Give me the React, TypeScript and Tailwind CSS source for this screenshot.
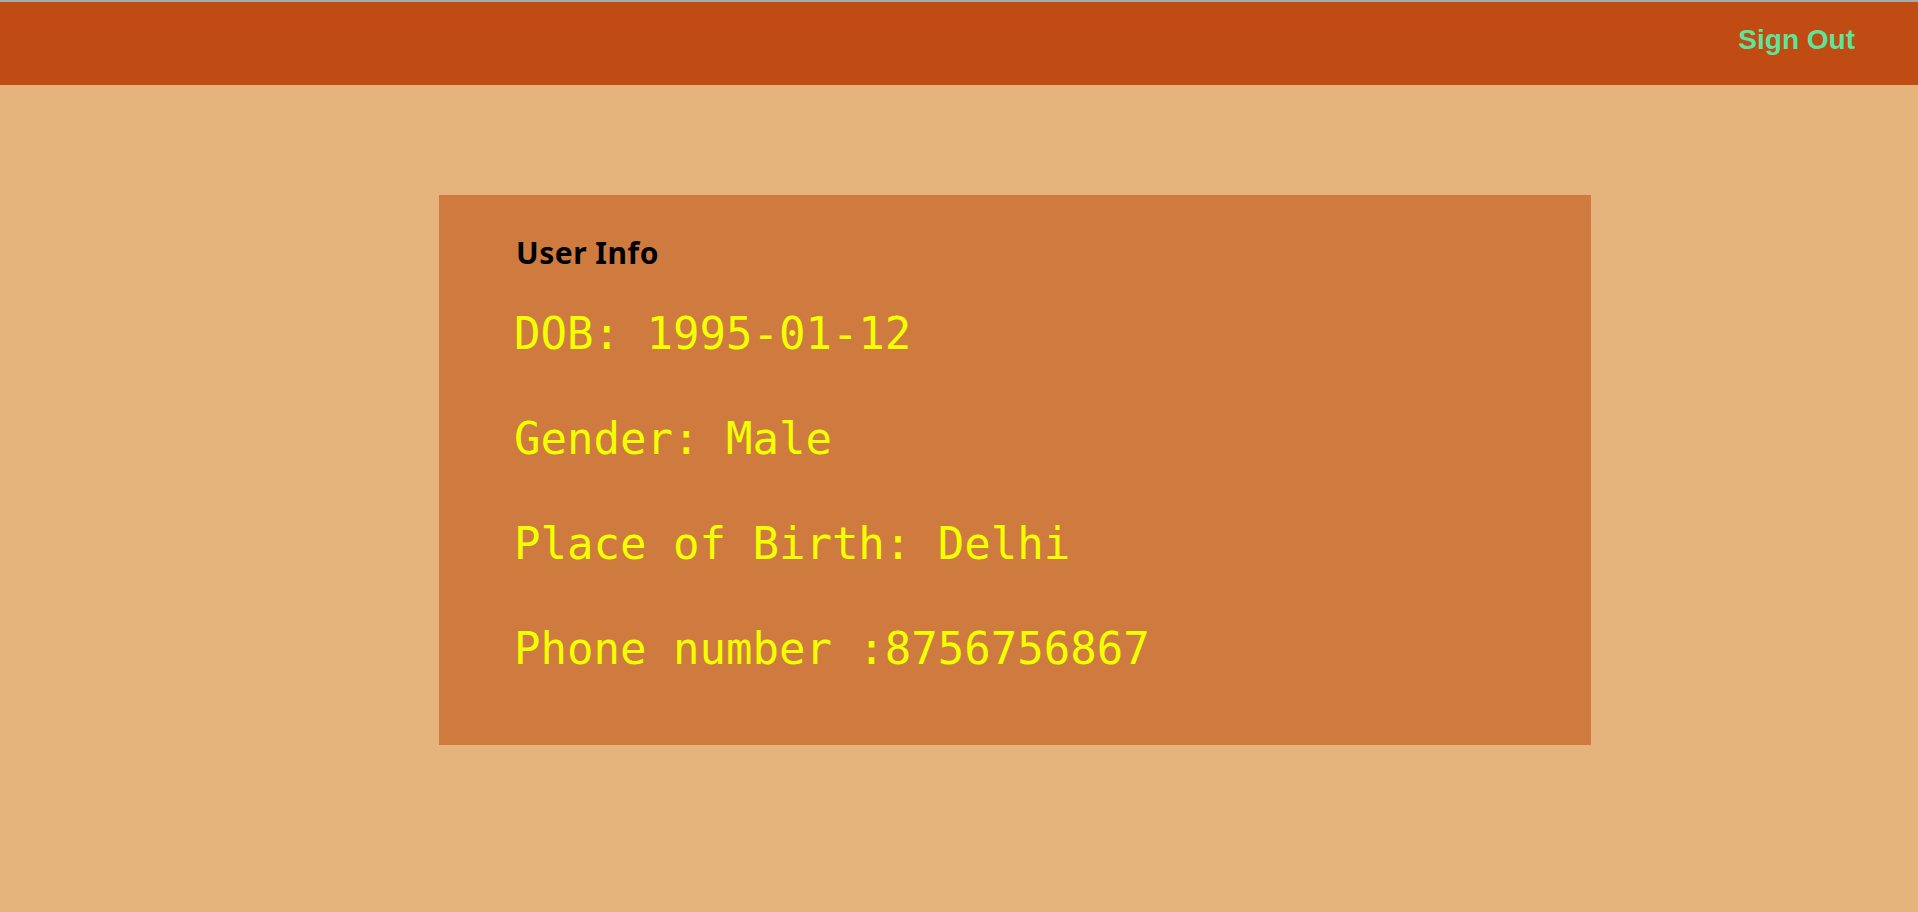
import React from "react";

export default function App() {
  const rows = [
    "DOB: 1995-01-12",
    "Gender: Male",
    "Place of Birth: Delhi",
    "Phone number :8756756867",
  ];
  return (
    <div className="min-h-screen w-full bg-[#e4b47c] border-t-2 border-[#a9a9a9]">
      <header className="h-[83px] w-full bg-[#c04b13] flex justify-end items-start pt-[22px] pr-[63px]">
        <button
          className="text-[28px] leading-[32px] font-bold text-[#5ce59a] whitespace-nowrap"
          style={{ fontFamily: '"Liberation Sans", Arial, sans-serif' }}
        >
          Sign Out
        </button>
      </header>
      <div className="pt-[110px] pl-[439px]">
        <div className="w-[1152px] h-[550px] bg-[#cf7b40] pt-[38px] pl-[77px]">
          <h3
            className="text-[30px] leading-[40px] font-bold tracking-[0.5px] text-black"
            style={{ fontFamily: '"Noto Sans", "Open Sans", sans-serif' }}
          >
            User Info
          </h3>
          <div
            className="mt-[8px] flex flex-col text-[44px] text-[#f2ff00] -ml-[2px]"
            style={{ fontFamily: '"DejaVu Sans Mono", "Liberation Mono", monospace' }}
          >
            {rows.map((r) => (
              <p key={r} className="h-[105px] leading-[105px] whitespace-pre">
                {r}
              </p>
            ))}
          </div>
        </div>
      </div>
    </div>
  );
}
